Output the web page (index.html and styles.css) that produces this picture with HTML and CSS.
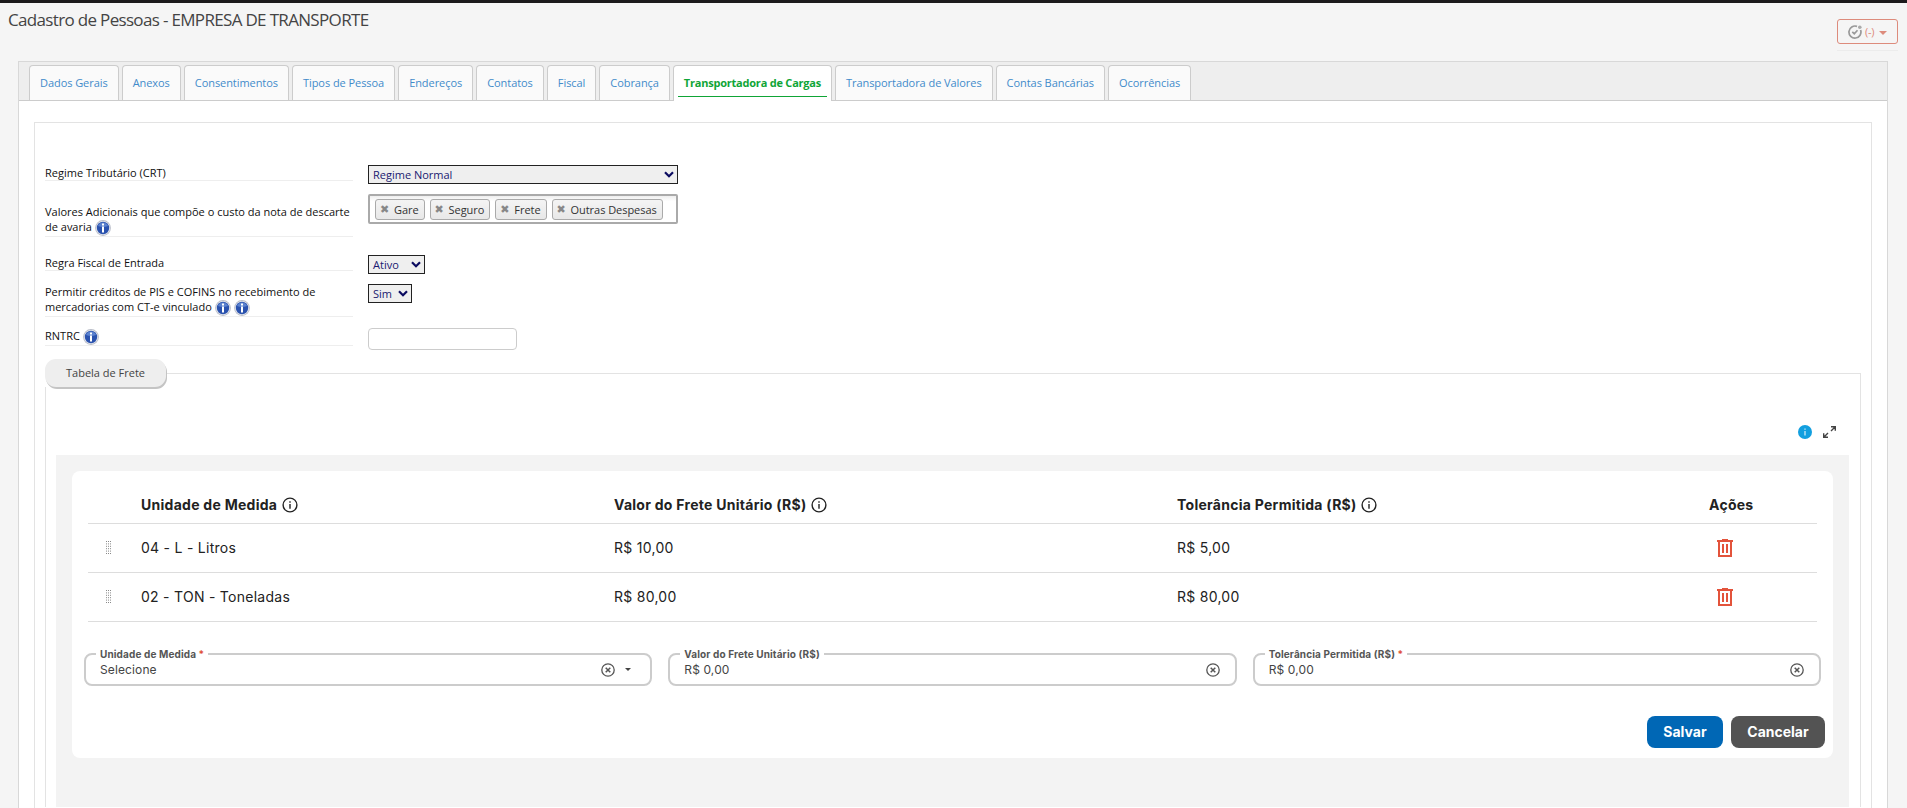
FILE: index.html
```html
<!DOCTYPE html>
<html lang="pt-BR">
<head>
    <meta charset="UTF-8">
    <meta name="viewport" content="width=device-width, initial-scale=1.0">
    <title>Cadastro de Pessoas</title>
    <link rel="stylesheet" href="styles.css">
</head>
<body>
    <!-- ícones reutilizados -->
    <svg class="sprite">
        <symbol id="help" viewBox="0 0 16 16">
            <circle cx="8" cy="8" r="7.900" fill="#b9bdc8"/>
            <circle cx="8" cy="8" r="7" fill="#e4e7ee"/>
            <circle cx="8" cy="8" r="6.200" fill="#2a52ae"/>
            <path d="M3 6a5.300 5.300 0 0 1 10 0q-5 2-10 0" fill="#5b82cf"/>
            <path d="M7 3.500h2v2H7zM7 6.500h2v6H7z" fill="#fff"/>
        </symbol>
        <symbol id="info" viewBox="0 0 16 16">
            <circle cx="8" cy="8" r="6.900" fill="none" stroke="#222" stroke-width="1.400"/>
            <path d="M7.300 4.300h1.400v1.400H7.300zM7.300 7h1.400v4.700H7.300z" fill="#222"/>
        </symbol>
        <symbol id="clear" viewBox="0 0 14 14">
            <circle cx="7" cy="7" r="6.200" fill="none" stroke="#555" stroke-width="1.300"/>
            <path d="M4.700 4.700l4.600 4.600M9.300 4.700l-4.600 4.600" stroke="#555" stroke-width="1.500"/>
        </symbol>
        <symbol id="trash" viewBox="0 0 16 18">
            <path d="M5 0h6v1h5v2H0V1h5zM1 3h2v13h10V3h2v15H1zM5 5h2v9H5zM9 5h2v9H9z" fill="#e3533b"/>
        </symbol>
        <symbol id="drag" viewBox="0 0 5 13">
            <path d="M.500 0v13M2.500 0v13M4.500 0v13" stroke="#888" stroke-dasharray="1 1.400"/>
        </symbol>
        <symbol id="arrow" viewBox="0 0 10 7">
            <path d="M1 1.200l4 4 4-4" fill="none" stroke="#0b0b60" stroke-width="2.200"/>
        </symbol>
    </svg>

    <header class="topo">
        <h1>Cadastro de Pessoas - EMPRESA DE TRANSPORTE</h1>
        <div class="acoes-topo">
            <button class="btn-status">
                <svg width="14" height="14" viewBox="0 0 14 14"><path d="M12.600 5A6 6 0 1 1 9 1.400M4.300 6.800l2 2 3.200-3.500" fill="none" stroke="#999" stroke-width="1.700"/><circle cx="11.800" cy="2.200" r="1.800" fill="#aaa"/></svg>
                <span>(-)</span>
                <i class="seta"></i>
            </button>
        </div>
    </header>

    <main class="painel">
        <nav class="abas">
            <a>Dados Gerais</a>
            <a>Anexos</a>
            <a>Consentimentos</a>
            <a>Tipos de Pessoa</a>
            <a>Endereços</a>
            <a>Contatos</a>
            <a>Fiscal</a>
            <a>Cobrança</a>
            <a class="ativa"><span>Transportadora de Cargas</span></a>
            <a>Transportadora de Valores</a>
            <a>Contas Bancárias</a>
            <a>Ocorrências</a>
        </nav>

        <section class="conteudo">
            <div class="linha linha-crt">
                <label>Regime Tributário (CRT)</label>
                <div class="select select-crt">Regime Normal <svg><use href="#arrow"/></svg></div>
            </div>
            <div class="linha linha-valores">
                <label>Valores Adicionais que compõe o custo da nota de descarte de avaria <svg class="help"><use href="#help"/></svg></label>
                <div class="chosen">
                    <span><b></b>Gare</span>
                    <span><b></b>Seguro</span>
                    <span><b></b>Frete</span>
                    <span><b></b>Outras Despesas</span>
                </div>
            </div>
            <div class="linha linha-regra">
                <label>Regra Fiscal de Entrada</label>
                <div class="select select-ativo">Ativo <svg><use href="#arrow"/></svg></div>
            </div>
            <div class="linha linha-pis">
                <label>Permitir créditos de PIS e COFINS no recebimento de mercadorias com CT-e vinculado <svg class="help"><use href="#help"/></svg> <svg class="help"><use href="#help"/></svg></label>
                <div class="select select-sim">Sim <svg><use href="#arrow"/></svg></div>
            </div>
            <div class="linha linha-rntrc">
                <label>RNTRC <svg class="help"><use href="#help"/></svg></label>
                <input type="text" class="campo-rntrc">
            </div>

            <fieldset class="frete">
                <legend>Tabela de Frete</legend>
                <div class="ferramentas">
                    <svg width="14" height="14" viewBox="0 0 14 14"><circle cx="7" cy="7" r="7" fill="#129fdf"/><path d="M6.500 3.500h1v1.300h-1zM6.500 6h1v4.500h-1z" fill="#fff"/></svg>
                    <svg width="13" height="12" viewBox="0 0 13 12"><path d="M8 .700h4.300v4M12 1L8 5M.700 7.300v4H5M1 11l4-4" fill="none" stroke="#444" stroke-width="1.400"/></svg>
                </div>
                <div class="fundo">
                    <div class="cartao">
                        <table>
                            <thead>
                                <tr>
                                    <th class="c-drag"></th>
                                    <th class="c-unidade">Unidade de Medida <svg class="info"><use href="#info"/></svg></th>
                                    <th class="c-valor">Valor do Frete Unitário (R$) <svg class="info"><use href="#info"/></svg></th>
                                    <th class="c-tolerancia">Tolerância Permitida (R$) <svg class="info"><use href="#info"/></svg></th>
                                    <th class="c-acoes">Ações</th>
                                </tr>
                            </thead>
                            <tbody>
                                <tr>
                                    <td><svg class="drag"><use href="#drag"/></svg></td>
                                    <td>04 - L - Litros</td>
                                    <td>R$ 10,00</td>
                                    <td>R$ 5,00</td>
                                    <td><svg class="trash"><use href="#trash"/></svg></td>
                                </tr>
                                <tr>
                                    <td><svg class="drag"><use href="#drag"/></svg></td>
                                    <td>02 - TON - Toneladas</td>
                                    <td>R$ 80,00</td>
                                    <td>R$ 80,00</td>
                                    <td><svg class="trash"><use href="#trash"/></svg></td>
                                </tr>
                            </tbody>
                        </table>

                        <div class="campos">
                            <fieldset class="campo">
                                <legend>Unidade de Medida <em>*</em></legend>
                                <span>Selecione</span>
                                <svg class="clear"><use href="#clear"/></svg>
                                <i class="seta"></i>
                            </fieldset>
                            <fieldset class="campo">
                                <legend>Valor do Frete Unitário (R$)</legend>
                                <span>R$ 0,00</span>
                                <svg class="clear"><use href="#clear"/></svg>
                            </fieldset>
                            <fieldset class="campo">
                                <legend>Tolerância Permitida (R$) <em>*</em></legend>
                                <span>R$ 0,00</span>
                                <svg class="clear"><use href="#clear"/></svg>
                            </fieldset>
                        </div>

                        <div class="botoes">
                            <button class="salvar">Salvar</button>
                            <button class="cancelar">Cancelar</button>
                        </div>
                    </div>
                </div>
            </fieldset>
        </section>
    </main>
</body>
</html>
```
FILE: styles.css
```css
* {
    box-sizing: border-box;
}
body {
    margin: 0;
    height: 808px;
    overflow: hidden;
    background: #f5f5f5;
    font-family: "Open Sans", sans-serif;
    font-size: 11px;
    color: #222;
    border-top: 3px solid #1c1a1c;
}
.sprite {
    display: none;
}
.topo {
    display: flex;
    justify-content: space-between;
    height: 58px;
    padding: 0 9px 0 8px;
}
h1 {
    margin: 5px 0 0;
    font-size: 17px;
    font-weight: normal;
    line-height: 24px;
    letter-spacing: -0.67px;
    color: #444;
}
.acoes-topo {
    margin-top: 16px;
    height: 32px;
    border-bottom: 1px solid #ececec;
}
.btn-status {
    display: flex;
    align-items: center;
    width: 61px;
    height: 25px;
    padding: 0 0 0 10px;
    border: 1px solid #dd8b7c;
    border-radius: 3px;
    background: none;
    font-family: "Open Sans", sans-serif;
    font-size: 11px;
    letter-spacing: -0.3px;
    color: #dd8b7c;
}
.btn-status span {
    margin: 0 5px 0 3px;
}
.seta {
    margin-top: 2px;
    border: 4px solid transparent;
    border-top-color: #dd8b7c;
    border-bottom: 0;
}
.painel {
    margin: 0 19px 0 18px;
    height: 747px;
    border: 1px solid #d8d8d8;
    border-bottom: 0;
    background: #fff;
}
.abas {
    display: flex;
    gap: 3px;
    height: 39px;
    padding: 3px 10px 0;
    background: #eee;
    border-bottom: 1px solid #ccc;
}
.abas a {
    height: 35px;
    padding: 0 10px;
    border: 1px solid #ccc;
    border-bottom: 0;
    border-radius: 4px 4px 0 0;
    background: #fafafa;
    line-height: 34px;
    letter-spacing: -0.06px;
    color: #428bca;
}
.abas .ativa {
    height: 36px;
    padding: 0 4px;
    background: #fff;
    font-weight: bold;
    letter-spacing: -0.22px;
    color: #0fa536;
}
.ativa span {
    display: block;
    height: 31px;
    padding: 0 6px;
    border-bottom: 1px solid #0fa536;
}
.conteudo {
    margin: 21px 15px 0;
    height: 686px;
    padding: 39px 10px 0;
    border: 1px solid #e3e3e3;
    border-bottom: 0;
}
.linha {
    display: flex;
    align-items: flex-start;
}
.linha label {
    width: 308px;
    margin-right: 15px;
    border-bottom: 1px solid #eee;
    line-height: 15px;
    color: #111;
}
.help {
    width: 16px;
    height: 16px;
    margin: -2px 0 -1px;
    vertical-align: -4px;
}
.linha-crt {
    height: 32px;
}
.linha-crt label {
    height: 19px;
    padding-top: 3px;
}
.linha-valores {
    height: 61px;
}
.linha-valores label {
    height: 43px;
    padding-top: 10px;
}
.linha-regra {
    height: 29px;
}
.linha-regra label {
    height: 16px;
}
.linha-pis {
    height: 44px;
}
.linha-pis label {
    height: 33px;
}
.linha-rntrc {
    height: 31px;
}
.linha-rntrc label {
    height: 18px;
}
.select {
    display: flex;
    justify-content: space-between;
    align-items: center;
    height: 19px;
    padding: 0 3px 0 4px;
    border: 1px solid #222;
    background: #efefef;
    color: #191970;
}
.select svg {
    width: 10px;
    height: 7px;
}
.select-crt {
    width: 310px;
    margin-top: 3px;
}
.select-ativo {
    width: 57px;
}
.select-sim {
    width: 44px;
}
.chosen {
    display: flex;
    gap: 5px;
    width: 310px;
    height: 30px;
    padding: 3px 5px;
    border: 2px solid #aaa;
    border-radius: 2px;
    background: linear-gradient(#eee, #fff 20%);
}
.chosen span {
    display: flex;
    align-items: center;
    height: 21px;
    padding: 0 5px 0 4px;
    border: 1px solid #aaa;
    border-radius: 3px;
    background: linear-gradient(#f4f4f4, #e8e8e8);
    letter-spacing: -0.05px;
    color: #333;
}
.chosen b::before {
    content: "✖";
    display: block;
    width: 14px;
    font: 11px "DejaVu Sans", sans-serif;
    color: #888;
}
.campo-rntrc {
    width: 149px;
    height: 22px;
    border: 1px solid #ccc;
    border-radius: 4px;
}
.frete {
    height: 448px;
    min-width: 0;
    margin: 0;
    padding: 0 11px 0 10px;
    border: 1px solid #e3e3e3;
    border-bottom: 0;
}
.frete > legend {
    height: 28px;
    margin-left: -11px;
    padding: 0 21px;
    border-radius: 11px;
    background: #eee;
    box-shadow: 1px 2px 0 #c4c4c4;
    line-height: 28px;
    color: #444;
}
.ferramentas {
    display: flex;
    justify-content: flex-end;
    align-items: center;
    gap: 11px;
    margin-top: 38px;
    padding-right: 13px;
}
.fundo {
    height: 352px;
    margin-top: 16px;
    padding: 16px;
    background: #f3f3f3;
    font-family: Inter, sans-serif;
}
.cartao {
    height: 287px;
    padding: 16px 8px 0 12px;
    border-radius: 8px;
    background: #fff;
}
table {
    width: 1729px;
    margin-left: 4px;
    border-collapse: collapse;
    table-layout: fixed;
    font-size: 14px;
    letter-spacing: 0.27px;
}
th,
td {
    height: 49px;
    padding: 0;
    border-bottom: 1px solid #ddd;
    text-align: left;
}
th {
    height: 36px;
}
.c-drag {
    width: 53px;
}
.c-unidade {
    width: 473px;
}
.c-valor {
    width: 563px;
}
.c-tolerancia {
    width: 532px;
}
.info {
    width: 16px;
    height: 16px;
    margin-left: 1px;
    vertical-align: -3px;
}
.drag {
    display: block;
    width: 5px;
    height: 13px;
    margin-left: 18px;
}
.trash {
    display: block;
    width: 16px;
    height: 18px;
    margin-left: 8px;
}
.campos {
    display: flex;
    gap: 16px;
    margin-right: 4px;
    padding-top: 26px;
}
.campo {
    display: flex;
    flex: 1;
    align-items: center;
    min-width: 0;
    height: 38px;
    margin: 0;
    padding: 0 15px 4px 14px;
    border: 2px solid #ccc;
    border-radius: 8px;
    font-size: 12px;
    letter-spacing: 0.12px;
    color: #444;
}
.campo legend {
    margin-left: -4px;
    padding: 0 4px;
    font-size: 10px;
    font-weight: bold;
    color: #555;
}
.campo em {
    font-style: normal;
    color: #e04f38;
}
.campo span {
    flex: 1;
}
.clear {
    width: 14px;
    height: 14px;
}
.campo .seta {
    margin: 0 4px 0 10px;
    border-width: 3px;
    border-bottom: 0;
    border-top-color: #444;
}
.botoes {
    display: flex;
    justify-content: flex-end;
    gap: 8px;
    margin-top: 30px;
}
.botoes button {
    height: 32px;
    padding: 0;
    border: 0;
    border-radius: 8px;
    font: bold 14px Inter, sans-serif;
    color: #fff;
}
.botoes .salvar {
    width: 76px;
    background: #0067b5;
}
.botoes .cancelar {
    width: 94px;
    background: #535353;
}
```
